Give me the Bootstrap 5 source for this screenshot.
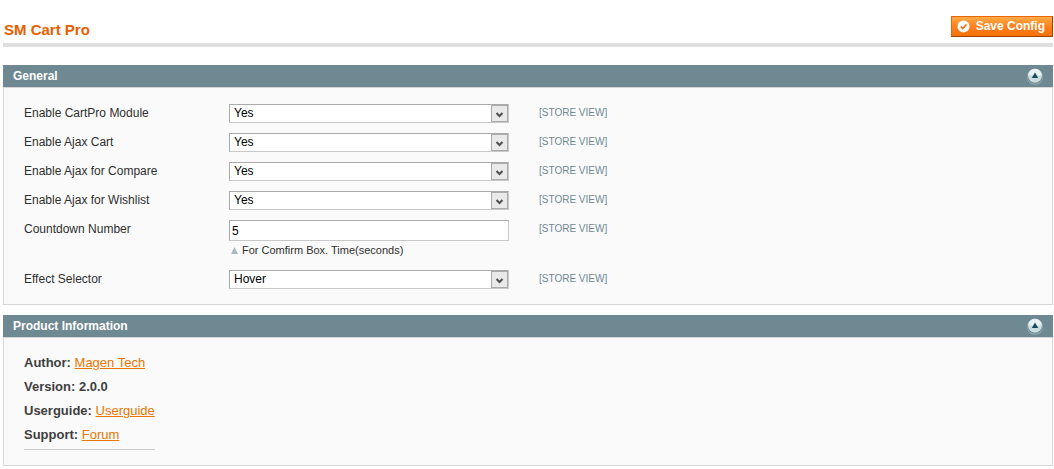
<!DOCTYPE html>
<html lang="en">
<head>
<meta charset="utf-8">
<meta name="viewport" content="width=device-width, initial-scale=1">
<title>SM Cart Pro</title>
<link rel="stylesheet" href="https://cdn.jsdelivr.net/npm/bootstrap@5.3.0/dist/css/bootstrap.min.css">
<style>
  body { font: 12px/18px "Liberation Sans", Arial, sans-serif; color: #2f2f2f; background: #fff; padding: 0 1px 0 3px; }
  .page-head { padding: 16px 0 4px 1px; border-bottom: 4px solid #dfdfdf; margin-bottom: 18px; margin-left: 0; }
  .page-head h1 { font-size: 15px; line-height: 18px; color: #eb5e00; padding-top: 5px; }
  .btn-save { border: 1px solid; border-color: #ed6502 #a04300 #a04300 #ed6502; border-radius: 0; color: #fff; font-size: 12px; line-height: 19px; padding: 0 7px 0 5px; gap: 6px;
    background: linear-gradient(#ffac47, #fd7f1c 50%, #f77208); }
  .btn-save:hover { color: #fff; background: #f77c16; }
  .section-head { background: #6f8992; color: #fff; height: 22px; padding: 0 10px; }
  .section-head h2 { font-size: 12px; line-height: 22px; }
  .toggle-btn { width: 16px; height: 17px; }
  .section-body { background: #fafafa; border: 1px solid #d6d6d6; }
  .section-gap { margin-bottom: 10px; }
  .config-form { padding: 16px 20px 15px; gap: 10px; }
  .field-label { width: 205px; line-height: 19px; }
  .field-value { width: 280px; }
  .field-scope { font-size: 10px; line-height: 18px; color: #6f8992; padding-left: 30px; }
  .field-value .form-select, .field-value .form-control { border: 1px solid; border-color: #aaa #c8c8c8 #c8c8c8 #aaa; border-radius: 0; background-color: #fff; color: #000; font-size: 12px; }
  .field-value .form-select { height: 19px; line-height: 16px; padding: 0 20px 1px 4px; background-position: right 0 top 0; background-size: 17px 17px;
    background-image: url("data:image/svg+xml,%3Csvg xmlns='http://www.w3.org/2000/svg' viewBox='0 0 17 17'%3E%3Crect x='.5' y='.5' width='16' height='16' fill='%23e9e9e9' stroke='%23aaa'/%3E%3Cpath d='M5.5 8L8.5 11L11.5 8' fill='none' stroke='%23505050' stroke-width='2'/%3E%3C/svg%3E"); }
  .field-value .form-control { height: 21px; line-height: 17px; padding: 0 2px; }
  .field-hint { font-size: 11px; line-height: 19px; padding-left: 2px; gap: 4px; }
  .info-list { font-size: 13px; line-height: 20px; padding: 15px 20px; color: #404040; }
  .info-list ul { border-bottom: 1px solid #ccc; padding-bottom: 4px; gap: 4px; }
  .info-list a { color: #ea7601; }
</style>
</head>
<body>
<header class="page-head d-flex justify-content-between align-items-start">
  <h1 class="fw-bold m-0">SM Cart Pro</h1>
  <button type="button" class="btn btn-save fw-bold d-flex align-items-center">
    <svg width="13" height="13" viewBox="0 0 13 13" aria-hidden="true"><circle cx="6.5" cy="6.5" r="6" fill="#fff"/><path d="M3.8 6.5l1.9 2 3.7-4" fill="none" stroke="#ec6a16" stroke-width="1.8"/></svg>
    Save Config
  </button>
</header>
<main>
  <section class="section-gap">
    <div class="section-head d-flex justify-content-between align-items-center">
      <h2 class="fw-bold m-0">General</h2>
      <button type="button" class="toggle-btn btn p-0 border-0 d-flex" aria-label="Collapse General" data-bs-toggle="collapse" data-bs-target="#general">
        <svg width="16" height="17" viewBox="0 0 16 17"><circle cx="8" cy="8.8" r="8" fill="#92aab0"/><circle cx="8" cy="8.3" r="7.2" fill="#587980"/><circle cx="8" cy="7.8" r="7" fill="#cbdce0"/><path d="M1.2 7.5a6.8 6.8 0 0 1 13.6 0z" fill="#e8f0f1"/><path d="M8 4.5L11.2 10H4.8z" fill="#174b5c"/></svg>
      </button>
    </div>
    <div id="general" class="section-body collapse show">
      <form class="config-form d-flex flex-column">
        <div class="d-flex"><label class="field-label" for="module">Enable CartPro Module</label><div class="field-value"><select id="module" class="form-select"><option>Yes</option><option>No</option></select></div><span class="field-scope">[STORE VIEW]</span></div>
        <div class="d-flex"><label class="field-label" for="ajax">Enable Ajax Cart</label><div class="field-value"><select id="ajax" class="form-select"><option>Yes</option><option>No</option></select></div><span class="field-scope">[STORE VIEW]</span></div>
        <div class="d-flex"><label class="field-label" for="compare">Enable Ajax for Compare</label><div class="field-value"><select id="compare" class="form-select"><option>Yes</option><option>No</option></select></div><span class="field-scope">[STORE VIEW]</span></div>
        <div class="d-flex"><label class="field-label" for="wishlist">Enable Ajax for Wishlist</label><div class="field-value"><select id="wishlist" class="form-select"><option>Yes</option><option>No</option></select></div><span class="field-scope">[STORE VIEW]</span></div>
        <div class="d-flex"><label class="field-label" for="countdown">Countdown Number</label><div class="field-value"><input id="countdown" type="text" class="form-control" value="5" aria-describedby="countdown-hint"><div id="countdown-hint" class="field-hint d-flex align-items-center"><svg width="7" height="7" viewBox="0 0 7 7" aria-hidden="true"><path d="M3.5 0L7 7H0z" fill="#a9b9bd"/></svg>For Comfirm Box. Time(seconds)</div></div><span class="field-scope">[STORE VIEW]</span></div>
        <div class="d-flex"><label class="field-label" for="effect">Effect Selector</label><div class="field-value"><select id="effect" class="form-select"><option>Hover</option><option>Click</option></select></div><span class="field-scope">[STORE VIEW]</span></div>
      </form>
    </div>
  </section>
  <section>
    <div class="section-head d-flex justify-content-between align-items-center">
      <h2 class="fw-bold m-0">Product Information</h2>
      <button type="button" class="toggle-btn btn p-0 border-0 d-flex" aria-label="Collapse Product Information" data-bs-toggle="collapse" data-bs-target="#product">
        <svg width="16" height="17" viewBox="0 0 16 17"><circle cx="8" cy="8.8" r="8" fill="#92aab0"/><circle cx="8" cy="8.3" r="7.2" fill="#587980"/><circle cx="8" cy="7.8" r="7" fill="#cbdce0"/><path d="M1.2 7.5a6.8 6.8 0 0 1 13.6 0z" fill="#e8f0f1"/><path d="M8 4.5L11.2 10H4.8z" fill="#174b5c"/></svg>
      </button>
    </div>
    <div id="product" class="section-body collapse show">
      <div class="info-list d-flex">
        <ul class="list-unstyled m-0 d-flex flex-column">
          <li><b>Author:</b> <a href="#">Magen Tech</a></li>
          <li><b>Version: 2.0.0</b></li>
          <li><b>Userguide:</b> <a href="#">Userguide</a></li>
          <li><b>Support:</b> <a href="#">Forum</a></li>
        </ul>
      </div>
    </div>
  </section>
</main>
<script src="https://cdn.jsdelivr.net/npm/bootstrap@5.3.0/dist/js/bootstrap.bundle.min.js"></script>
</body>
</html>
